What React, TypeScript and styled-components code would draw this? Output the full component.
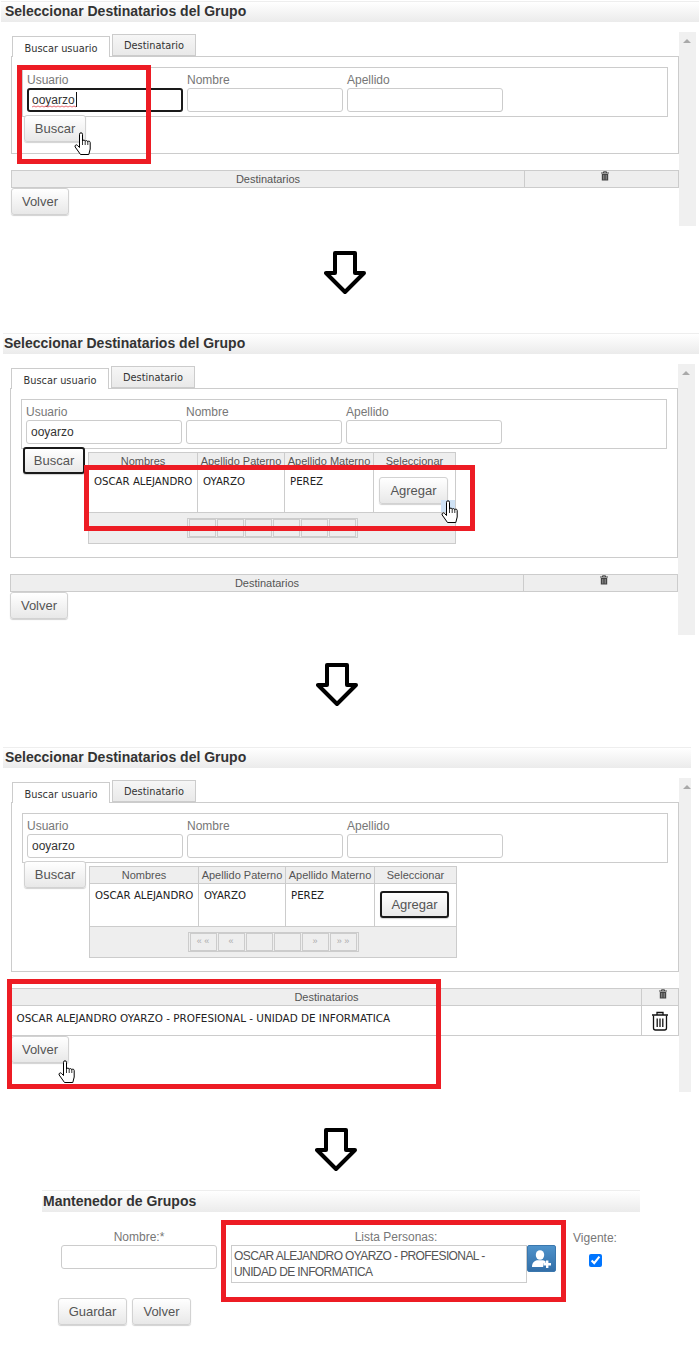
import * as React from "react";
import styled, { createGlobalStyle } from "styled-components";

const GlobalStyle = createGlobalStyle`
  html, body {
    margin: 0;
    padding: 0;
    background: #fff;
    font-family: "Liberation Sans", Arial, sans-serif;
  }
`;

const VERDANA = `"DejaVu Sans", Verdana, sans-serif`;

const Page = styled.div`
  width: 699px;
  height: 1352px;
  overflow: hidden;
  padding-top: 1px;
  box-sizing: border-box;
`;

const Shot = styled.section<{ $height: number }>`
  position: relative;
  height: ${(p) => p.$height}px;
`;

const TitleBar = styled.h2<{ $left: number; $width: number; $inset?: number; $tall?: boolean }>`
  margin: 0 0 0 ${(p) => p.$left}px;
  width: ${(p) => p.$width}px;
  height: ${(p) => (p.$tall ? 22 : 21)}px;
  padding-left: ${(p) => p.$inset ?? 1}px;
  box-sizing: border-box;
  background: linear-gradient(#eee 0 1px, #fff 1px, #ebebeb);
  font-size: 14px;
  font-weight: 700;
  line-height: ${(p) => (p.$tall ? 22 : 20)}px;
  color: #333;
`;

const Body = styled.div<{ $left: number }>`
  display: flex;
  margin: 10px 0 0 ${(p) => p.$left}px;
`;

const Main = styled.div`
  width: 668px;
  padding-top: 3px;
`;

const ScrollTrack = styled.div<{ $width: number; $height: number }>`
  width: ${(p) => p.$width}px;
  height: ${(p) => p.$height}px;
  background: #f0f0f0;
  position: relative;
  &::before {
    content: "";
    position: absolute;
    top: 7px;
    left: 4px;
    border-left: 4px solid transparent;
    border-right: 4px solid transparent;
    border-bottom: 4px solid #a9a9a9;
  }
`;

const TabStrip = styled.div`
  display: flex;
  align-items: flex-end;
  gap: 2px;
  height: 21px;
  padding-left: 1px;
  position: relative;
  z-index: 1;
`;

const Tab = styled.div<{ $active?: boolean; $width: number }>`
  width: ${(p) => p.$width}px;
  height: ${(p) => (p.$active ? 21 : 22)}px;
  margin-bottom: ${(p) => (p.$active ? -1 : 0)}px;
  box-sizing: border-box;
  border: 1px solid #ccc;
  border-bottom: ${(p) => (p.$active ? "none" : "1px solid #ccc")};
  background: ${(p) => (p.$active ? "#fff" : "linear-gradient(#f6f6f6, #e9e9e9)")};
  font-family: ${VERDANA};
  font-size: 9.8px;
  color: #333;
  line-height: ${(p) => (p.$active ? 23 : 22)}px;
  text-align: center;
`;

const TabPanel = styled.div<{ $height: number }>`
  height: ${(p) => p.$height}px;
  box-sizing: border-box;
  border: 1px solid #ccc;
  padding: 10px 10px 0;
`;

const SearchBox = styled.div`
  width: 646px;
  height: 50px;
  box-sizing: border-box;
  border: 1px solid #ccc;
  padding: 4px 4px 0;
  display: flex;
  gap: 4px;
`;

const Field = styled.label`
  display: flex;
  flex-direction: column;
  position: relative;
  width: 156px;
`;

const FieldLabel = styled.span`
  font-size: 12px;
  line-height: 16px;
  color: #777;
`;

const TextInput = styled.input<{ $focused?: boolean }>`
  width: 100%;
  height: 24px;
  box-sizing: border-box;
  border: ${(p) => (p.$focused ? "2px solid #1a1a1a" : "1px solid #ccc")};
  border-radius: 3px;
  padding: 0 ${(p) => (p.$focused ? 3 : 4)}px;
  outline: none;
  background: #fff;
  font-family: "Liberation Sans", Arial, sans-serif;
  font-size: 12px;
  color: #333;
`;

const Caret = styled.span`
  position: absolute;
  left: 49px;
  top: 20px;
  width: 1px;
  height: 15px;
  background: #111;
`;

const Squiggle = styled.svg`
  position: absolute;
  left: 5px;
  top: 33px;
  width: 44px;
  height: 3px;
`;

const ResultsRow = styled.div`
  display: flex;
  align-items: flex-start;
  margin: -2px 0 0 2px;
`;

const Btn = styled.button<{ $focused?: boolean; $width: number }>`
  width: ${(p) => p.$width}px;
  height: 27px;
  flex: none;
  box-sizing: border-box;
  padding: 0;
  border: ${(p) => (p.$focused ? "2px solid #1a1a1a" : "1px solid #d2d2d2")};
  border-radius: 3px;
  background: linear-gradient(#fff, #e8e8e8);
  box-shadow: 0 1px 1px rgba(0, 0, 0, 0.18);
  font-family: "Liberation Sans", Arial, sans-serif;
  font-size: 13px;
  color: #555;
`;

const ResultTable = styled.table`
  width: 368px;
  margin: 5px 0 0 3px;
  border-collapse: collapse;
  table-layout: fixed;
`;

const HeadCell = styled.th<{ $width?: number }>`
  width: ${(p) => (p.$width ? `${p.$width}px` : "auto")};
  height: 16px;
  padding: 0;
  border: 1px solid #ccc;
  background: #eee;
  font-size: 11px;
  font-weight: 400;
  color: #555;
  white-space: nowrap;
  overflow: hidden;
`;

const BodyCell = styled.td`
  height: 43px;
  padding: 6px 0 0 5px;
  box-sizing: border-box;
  border: 1px solid #ccc;
  vertical-align: top;
  font-family: ${VERDANA};
  font-size: 10.2px;
  line-height: 12px;
  color: #222;
  white-space: nowrap;
`;

const ActionCell = styled.td`
  height: 43px;
  padding: 7px 0 0 5px;
  box-sizing: border-box;
  border: 1px solid #ccc;
  vertical-align: top;
`;

const PagerCell = styled.td`
  height: 30px;
  padding: 0;
  border: 1px solid #ccc;
  background: #eee;
`;

const Pager = styled.div`
  width: 171px;
  height: 20px;
  margin: 0 auto;
  box-sizing: border-box;
  border: 1px solid #ccc;
  display: flex;
  justify-content: center;
  align-items: center;
  gap: 1px;
`;

const PagerBtn = styled.span`
  width: 27px;
  height: 18px;
  box-sizing: border-box;
  border: 1px solid #ccc;
  font-size: 9px;
  line-height: 15px;
  color: #aaa;
  text-align: center;
`;

const DestTable = styled.table`
  width: 668px;
  margin-top: 16px;
  border-collapse: collapse;
  table-layout: fixed;
`;

const DestHead = styled(HeadCell)`
  position: relative;
`;

const DestCell = styled.td`
  height: 29px;
  padding: 0 0 6px 5px;
  box-sizing: border-box;
  border: 1px solid #ccc;
  border-left: none;
  font-family: ${VERDANA};
  font-size: 10.4px;
  color: #222;
  white-space: nowrap;
`;

const DeleteCell = styled.td`
  height: 29px;
  padding: 0;
  border: 1px solid #ccc;
  text-align: center;
  line-height: 0;
`;

const SmallTrash = styled.svg`
  position: absolute;
  top: 0;
  left: 50%;
  margin-left: -2px;
  width: 10px;
  height: 10px;
`;

const RedBox = styled.div<{ $x: number; $y: number; $w: number; $h: number }>`
  position: absolute;
  left: ${(p) => p.$x}px;
  top: ${(p) => p.$y}px;
  width: ${(p) => p.$w}px;
  height: ${(p) => p.$h}px;
  box-sizing: border-box;
  border: 5px solid #ed1c24;
  z-index: 3;
`;

const Cursor = styled.svg<{ $x: number; $y: number }>`
  position: absolute;
  left: ${(p) => p.$x}px;
  top: ${(p) => p.$y}px;
  width: 18px;
  height: 24px;
  z-index: 4;
`;

const Selection = styled.div<{ $x: number; $y: number }>`
  position: absolute;
  left: ${(p) => p.$x}px;
  top: ${(p) => p.$y}px;
  width: 14px;
  height: 12px;
  background: #cfe2f5;
  z-index: 2;
`;

const ArrowRow = styled.div<{ $height: number; $top: number; $left: number }>`
  height: ${(p) => p.$height}px;
  box-sizing: border-box;
  padding: ${(p) => p.$top}px 0 0 ${(p) => p.$left}px;
`;

const ArrowSvg = styled.svg`
  display: block;
  width: 42px;
  height: 44px;
`;

const GroupForm = styled.div`
  display: flex;
  margin: 0 0 0 61px;
  padding-top: 16px;
`;

const FormCol = styled.div<{ $width: number; $gap?: number }>`
  width: ${(p) => p.$width}px;
  margin-right: ${(p) => p.$gap ?? 0}px;
  display: flex;
  flex-direction: column;
  align-items: center;
`;

const FormLabel = styled.span<{ $shift?: number }>`
  height: 17px;
  margin-left: ${(p) => p.$shift ?? 0}px;
  font-size: 12px;
  line-height: 19px;
  color: #777;
`;

const PersonRow = styled.div`
  display: flex;
  align-items: flex-start;
  width: 100%;
`;

const PersonList = styled.div`
  width: 296px;
  height: 38px;
  box-sizing: border-box;
  border: 1px solid #ccc;
  padding: 2px 2px 0;
  font-size: 12px;
  letter-spacing: -0.6px;
  line-height: 16px;
  color: #555;
`;

const AddBtn = styled.button`
  width: 29px;
  height: 27px;
  padding: 0;
  border: 1px solid #3a77ad;
  border-radius: 2px;
  background: linear-gradient(#4f93cb, #336fa8);
  display: flex;
  align-items: center;
  justify-content: center;
`;

const VigenteLabel = styled(FormLabel)`
  margin-top: 1px;
`;

const CheckInput = styled.input`
  width: 13px;
  height: 13px;
  margin: 8px 0 0;
`;

const FormActions = styled.div`
  display: flex;
  gap: 5px;
  margin: 15px 0 0 58px;
`;

const HandCursor: React.FC<{ x: number; y: number }> = ({ x, y }) => (
  <Cursor $x={x} $y={y} viewBox="0 0 18 24">
    <path
      d="M5.5 2.3a1.5 1.5 0 0 1 3 0V9a1.4 1.4 0 0 1 2.7.3 1.4 1.4 0 0 1 2.6.5 1.3 1.3 0 0 1 2.4.7V17l-1.4 5.5H6.5L1.2 15a1.4 1.4 0 0 1 2.2-1.7l2.1 2.2Z"
      fill="#fff"
      stroke="#000"
      strokeWidth="1"
      strokeLinejoin="round"
    />
    <path d="M8.5 9v4M11.2 9.3V13M13.8 9.8V13" stroke="#000" strokeWidth="0.8" />
  </Cursor>
);

const BlockArrow: React.FC = () => (
  <ArrowSvg viewBox="0 0 42 44">
    <polygon
      points="11,2 31,2 31,22 40,22 21,41 2,22 11,22"
      fill="#fff"
      stroke="#000"
      strokeWidth="4"
      strokeLinejoin="round"
    />
  </ArrowSvg>
);

const HeadTrash: React.FC = () => (
  <SmallTrash viewBox="0 0 10 10">
    <path d="M1 2h8M3.5 2V.8h3V2" stroke="#444" strokeWidth="1" fill="none" />
    <path d="M1.8 3h6.4v6.5H1.8Z" fill="#444" />
    <path d="M3.8 4v4.5M6.2 4v4.5" stroke="#bbb" strokeWidth="0.7" />
  </SmallTrash>
);

const BigTrash: React.FC = () => (
  <svg width="18" height="20" viewBox="0 0 18 20" fill="none" stroke="#111" strokeWidth="1.3">
    <path d="M1 4h16M6 4V1.5h6V4" />
    <path d="M2.5 4.5V17a2 2 0 0 0 2 2h9a2 2 0 0 0 2-2V4.5" />
    <path d="M6.2 7.5v8.5M9 7.5v8.5M11.8 7.5v8.5" />
  </svg>
);

const UserPlusIcon: React.FC = () => (
  <svg width="20" height="18" viewBox="0 0 20 18" fill="#fff">
    <ellipse cx="8" cy="5" rx="4.2" ry="4.8" />
    <path d="M0 17c0-4.5 2.5-6.2 5-6.8h6c1.2.2 2 .6 2.6 1.3v1.7h-2.4v3.8Z" />
    <path d="M14 10.5h2.4v2.6H19v2.4h-2.6V18H14v-2.5h-2.6v-2.4H14Z" />
  </svg>
);

const SearchFields: React.FC<{ focused?: boolean }> = ({ focused }) => (
  <SearchBox>
    <Field>
      <FieldLabel>Usuario</FieldLabel>
      <TextInput $focused={focused} value="ooyarzo" readOnly spellCheck={false} />
      {focused && <Caret />}
      {focused && (
        <Squiggle viewBox="0 0 44 3">
          <path
            d="M0 2 L2 1 L4 2 L6 1 L8 2 L10 1 L12 2 L14 1 L16 2 L18 1 L20 2 L22 1 L24 2 L26 1 L28 2 L30 1 L32 2 L34 1 L36 2 L38 1 L40 2 L42 1 L44 2"
            fill="none"
            stroke="#e0484e"
            strokeWidth="0.8"
          />
        </Squiggle>
      )}
    </Field>
    <Field>
      <FieldLabel>Nombre</FieldLabel>
      <TextInput readOnly />
    </Field>
    <Field>
      <FieldLabel>Apellido</FieldLabel>
      <TextInput readOnly />
    </Field>
  </SearchBox>
);

const Tabs: React.FC = () => (
  <TabStrip>
    <Tab $active $width={98}>
      Buscar usuario
    </Tab>
    <Tab $width={84}>Destinatario</Tab>
  </TabStrip>
);

const Results: React.FC<{ focusAdd?: boolean; glyphs?: boolean }> = ({ focusAdd, glyphs }) => {
  const labels = glyphs ? ["« «", "«", "", "", "»", "» »"] : ["", "", "", "", "", ""];
  return (
    <ResultTable>
      <thead>
        <tr>
          <HeadCell $width={108}>Nombres</HeadCell>
          <HeadCell $width={86}>Apellido Paterno</HeadCell>
          <HeadCell $width={88}>Apellido Materno</HeadCell>
          <HeadCell>Seleccionar</HeadCell>
        </tr>
      </thead>
      <tbody>
        <tr>
          <BodyCell>OSCAR ALEJANDRO</BodyCell>
          <BodyCell>OYARZO</BodyCell>
          <BodyCell>PEREZ</BodyCell>
          <ActionCell>
            <Btn $focused={focusAdd} $width={69}>
              Agregar
            </Btn>
          </ActionCell>
        </tr>
        <tr>
          <PagerCell colSpan={4}>
            <Pager>
              {labels.map((label, i) => (
                <PagerBtn key={i}>{label}</PagerBtn>
              ))}
            </Pager>
          </PagerCell>
        </tr>
      </tbody>
    </ResultTable>
  );
};

const Recipients: React.FC<{ trashWidth: number; person?: string }> = ({ trashWidth, person }) => (
  <DestTable>
    <thead>
      <tr>
        <HeadCell>Destinatarios</HeadCell>
        <DestHead $width={trashWidth}>
          <HeadTrash />
        </DestHead>
      </tr>
    </thead>
    {person && (
      <tbody>
        <tr>
          <DestCell>{person}</DestCell>
          <DeleteCell>
            <BigTrash />
          </DeleteCell>
        </tr>
      </tbody>
    )}
  </DestTable>
);

const PERSON = "OSCAR ALEJANDRO OYARZO - PROFESIONAL - UNIDAD DE INFORMATICA";

export default function App() {
  return (
    <Page>
      <GlobalStyle />

      <Shot $height={226}>
        <TitleBar $left={1} $width={698} $inset={4}>
          Seleccionar Destinatarios del Grupo
        </TitleBar>
        <Body $left={11}>
          <Main>
            <Tabs />
            <TabPanel $height={98}>
              <SearchFields focused />
              <ResultsRow>
                <Btn $width={62}>Buscar</Btn>
              </ResultsRow>
            </TabPanel>
            <Recipients trashWidth={153} />
            <Btn $width={58}>Volver</Btn>
          </Main>
          <ScrollTrack $width={17} $height={194} />
        </Body>
        <RedBox $x={17} $y={64} $w={134} $h={99} />
        <HandCursor x={74} y={131} />
      </Shot>

      <ArrowRow $height={106} $top={24} $left={324}>
        <BlockArrow />
      </ArrowRow>

      <Shot $height={302}>
        <TitleBar $left={3} $width={696}>
          Seleccionar Destinatarios del Grupo
        </TitleBar>
        <Body $left={10}>
          <Main>
            <Tabs />
            <TabPanel $height={170}>
              <SearchFields />
              <ResultsRow>
                <Btn $focused $width={62}>
                  Buscar
                </Btn>
                <Results />
              </ResultsRow>
            </TabPanel>
            <Recipients trashWidth={153} />
            <Btn $width={58}>Volver</Btn>
          </Main>
          <ScrollTrack $width={17} $height={271} />
        </Body>
        <RedBox $x={84} $y={132} $w={391} $h={66} />
        <Selection $x={441} $y={167} />
        <HandCursor x={441} y={167} />
      </Shot>

      <ArrowRow $height={112} $top={28} $left={316}>
        <BlockArrow />
      </ArrowRow>

      <Shot $height={345}>
        <TitleBar $left={3} $width={688} $inset={2}>
          Seleccionar Destinatarios del Grupo
        </TitleBar>
        <Body $left={11}>
          <Main>
            <Tabs />
            <TabPanel $height={170}>
              <SearchFields />
              <ResultsRow>
                <Btn $width={62}>Buscar</Btn>
                <Results focusAdd glyphs />
              </ResultsRow>
            </TabPanel>
            <Recipients trashWidth={36} person={PERSON} />
            <Btn $width={58}>Volver</Btn>
          </Main>
          <ScrollTrack $width={12} $height={314} />
        </Body>
        <RedBox $x={7} $y={232} $w={434} $h={110} />
        <HandCursor x={58} y={313} />
      </Shot>

      <ArrowRow $height={98} $top={36} $left={315}>
        <BlockArrow />
      </ArrowRow>

      <Shot $height={162}>
        <TitleBar $left={42} $width={598} $tall>
          Mantenedor de Grupos
        </TitleBar>
        <GroupForm>
          <FormCol $width={156} $gap={14}>
            <FormLabel>Nombre:*</FormLabel>
            <TextInput readOnly />
          </FormCol>
          <FormCol $width={325} $gap={17}>
            <FormLabel $shift={5}>Lista Personas:</FormLabel>
            <PersonRow>
              <PersonList>{PERSON}</PersonList>
              <AddBtn>
                <UserPlusIcon />
              </AddBtn>
            </PersonRow>
          </FormCol>
          <FormCol $width={44}>
            <VigenteLabel>Vigente:</VigenteLabel>
            <CheckInput type="checkbox" checked readOnly />
          </FormCol>
        </GroupForm>
        <FormActions>
          <Btn $width={69}>Guardar</Btn>
          <Btn $width={59}>Volver</Btn>
        </FormActions>
        <RedBox $x={221} $y={30} $w={345} $h={82} />
      </Shot>
    </Page>
  );
}
